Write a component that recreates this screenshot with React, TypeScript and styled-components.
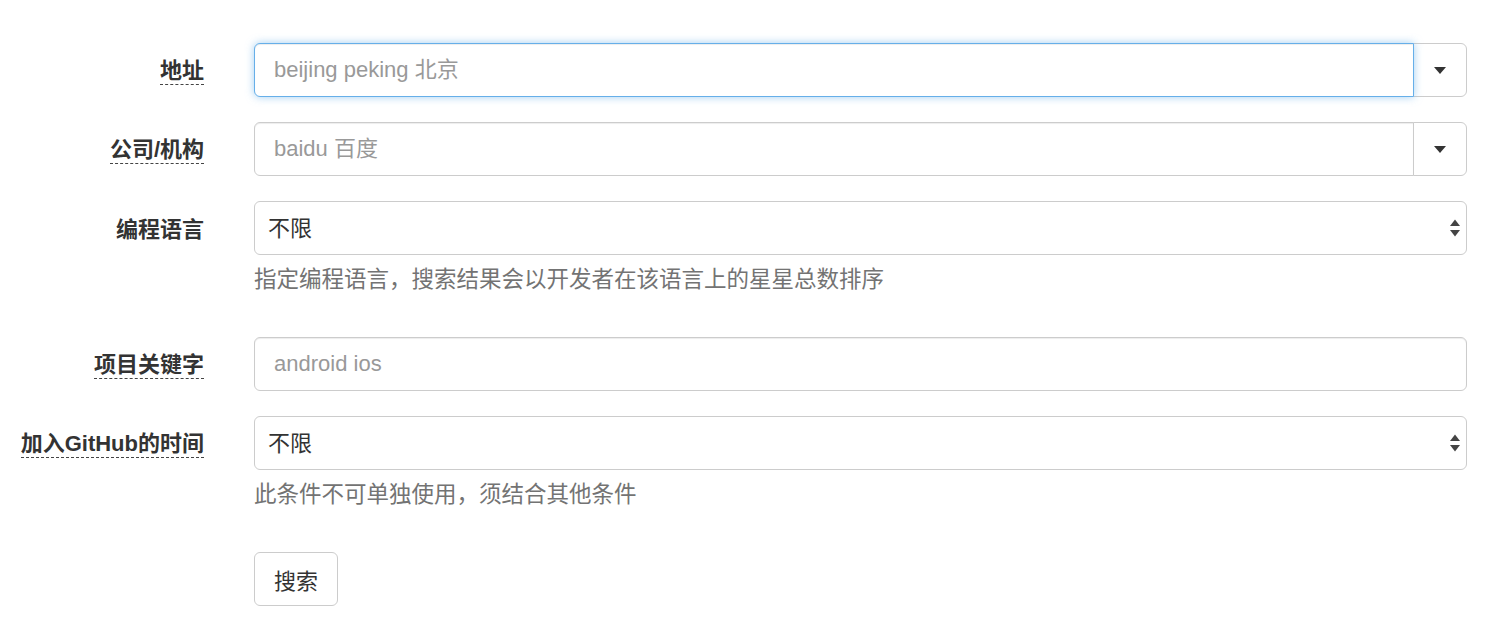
import React from 'react'
import styled, { createGlobalStyle, css } from 'styled-components'

const GlobalStyle = createGlobalStyle`
    html, body {
        margin: 0;
        padding: 0;
        background: #fff;
    }
    body {
        font-family: 'Liberation Sans', 'Noto Sans CJK SC', sans-serif;
        font-size: 22px;
        color: #333;
    }
    * {
        box-sizing: border-box;
    }
`

const Form = styled.form`
    display: flex;
    flex-direction: column;
    gap: 25px;
    padding: 43px 27px 0 0;
`

const Group = styled.div`
    display: grid;
    grid-template-columns: 204px 1fr;
    column-gap: 50px;
`

const LabelCell = styled.div`
    display: flex;
    justify-content: flex-end;
    align-items: center;
    height: 54px;
`

const LabelText = styled.label<{ $tip?: boolean }>`
    font-weight: 700;
    font-size: 22px;
    line-height: 27px;
    color: #333;
    white-space: nowrap;
    margin-top: 2px;
    ${p => p.$tip && css`
        border-bottom: 1px dashed #444;
    `}
`

const Field = styled.div`
    display: flex;
    flex-direction: column;
`

const baseControl = css`
    height: 54px;
    font-family: inherit;
    font-size: 22px;
    color: #555;
    background: #fff;
    border: 1px solid #ccc;
    border-radius: 6px;
    box-shadow: inset 0 1px 1px rgba(0, 0, 0, 0.075);
    outline: none;
`

const TextInput = styled.input<{ $focus?: boolean }>`
    ${baseControl};
    width: 100%;
    padding: 0 19px;
    &::placeholder {
        color: #999;
    }
    ${p => p.$focus && css`
        border-color: #66afe9;
        box-shadow: inset 0 1px 1px rgba(0, 0, 0, 0.075), 0 0 8px rgba(102, 175, 233, 0.6);
    `}
`

const InputGroup = styled.div`
    display: flex;
    ${TextInput} {
        flex: 1;
        border-top-right-radius: 0;
        border-bottom-right-radius: 0;
        position: relative;
        z-index: 2;
    }
`

const AddonButton = styled.button`
    width: 54px;
    height: 54px;
    margin-left: -1px;
    display: flex;
    align-items: center;
    justify-content: center;
    background: #fff;
    border: 1px solid #ccc;
    border-radius: 0 6px 6px 0;
    padding: 0;
    cursor: pointer;
`

const SelectWrap = styled.div`
    position: relative;
`

const Select = styled.select`
    ${baseControl};
    width: 100%;
    padding: 0 30px 0 13px;
    appearance: none;
    color: #333;
    box-shadow: none;
`

const SelectArrows = styled.svg`
    position: absolute;
    right: 6px;
    top: 50%;
    transform: translateY(-50%);
    pointer-events: none;
`

const Help = styled.p`
    margin: 9px 0 17px;
    font-size: 22.5px;
    line-height: 31px;
    color: #737373;
`

const SubmitButton = styled.button`
    justify-self: start;
    height: 54px;
    padding: 0 19px;
    font-family: inherit;
    font-size: 22px;
    color: #333;
    background: #fff;
    border: 1px solid #ccc;
    border-radius: 6px;
    cursor: pointer;
`

const Caret = () => (
    <svg width="12" height="7" viewBox="0 0 12 7">
        <path d="M0 0 L12 0 L6 7 Z" fill="#333" />
    </svg>
)

const Arrows = () => (
    <SelectArrows width="12" height="20" viewBox="0 0 12 20">
        <path d="M1 8 L6 1.5 L11 8 Z" fill="#444" />
        <path d="M1 12 L11 12 L6 18.5 Z" fill="#444" />
    </SelectArrows>
)

const App = () => {
    return (
        <>
            <GlobalStyle />
            <Form onSubmit={e => e.preventDefault()}>
                <Group>
                    <LabelCell><LabelText $tip>地址</LabelText></LabelCell>
                    <InputGroup>
                        <TextInput $focus placeholder="beijing peking 北京" />
                        <AddonButton type="button"><Caret /></AddonButton>
                    </InputGroup>
                </Group>
                <Group>
                    <LabelCell><LabelText $tip>公司/机构</LabelText></LabelCell>
                    <InputGroup>
                        <TextInput placeholder="baidu 百度" />
                        <AddonButton type="button"><Caret /></AddonButton>
                    </InputGroup>
                </Group>
                <Group>
                    <LabelCell><LabelText>编程语言</LabelText></LabelCell>
                    <Field>
                        <SelectWrap>
                            <Select defaultValue="any">
                                <option value="any">不限</option>
                            </Select>
                            <Arrows />
                        </SelectWrap>
                        <Help>指定编程语言，搜索结果会以开发者在该语言上的星星总数排序</Help>
                    </Field>
                </Group>
                <Group>
                    <LabelCell><LabelText $tip>项目关键字</LabelText></LabelCell>
                    <TextInput placeholder="android ios" />
                </Group>
                <Group>
                    <LabelCell><LabelText $tip>加入GitHub的时间</LabelText></LabelCell>
                    <Field>
                        <SelectWrap>
                            <Select defaultValue="any">
                                <option value="any">不限</option>
                            </Select>
                            <Arrows />
                        </SelectWrap>
                        <Help>此条件不可单独使用，须结合其他条件</Help>
                    </Field>
                </Group>
                <Group>
                    <div />
                    <SubmitButton type="submit">搜索</SubmitButton>
                </Group>
            </Form>
        </>
    )
}

export default App
